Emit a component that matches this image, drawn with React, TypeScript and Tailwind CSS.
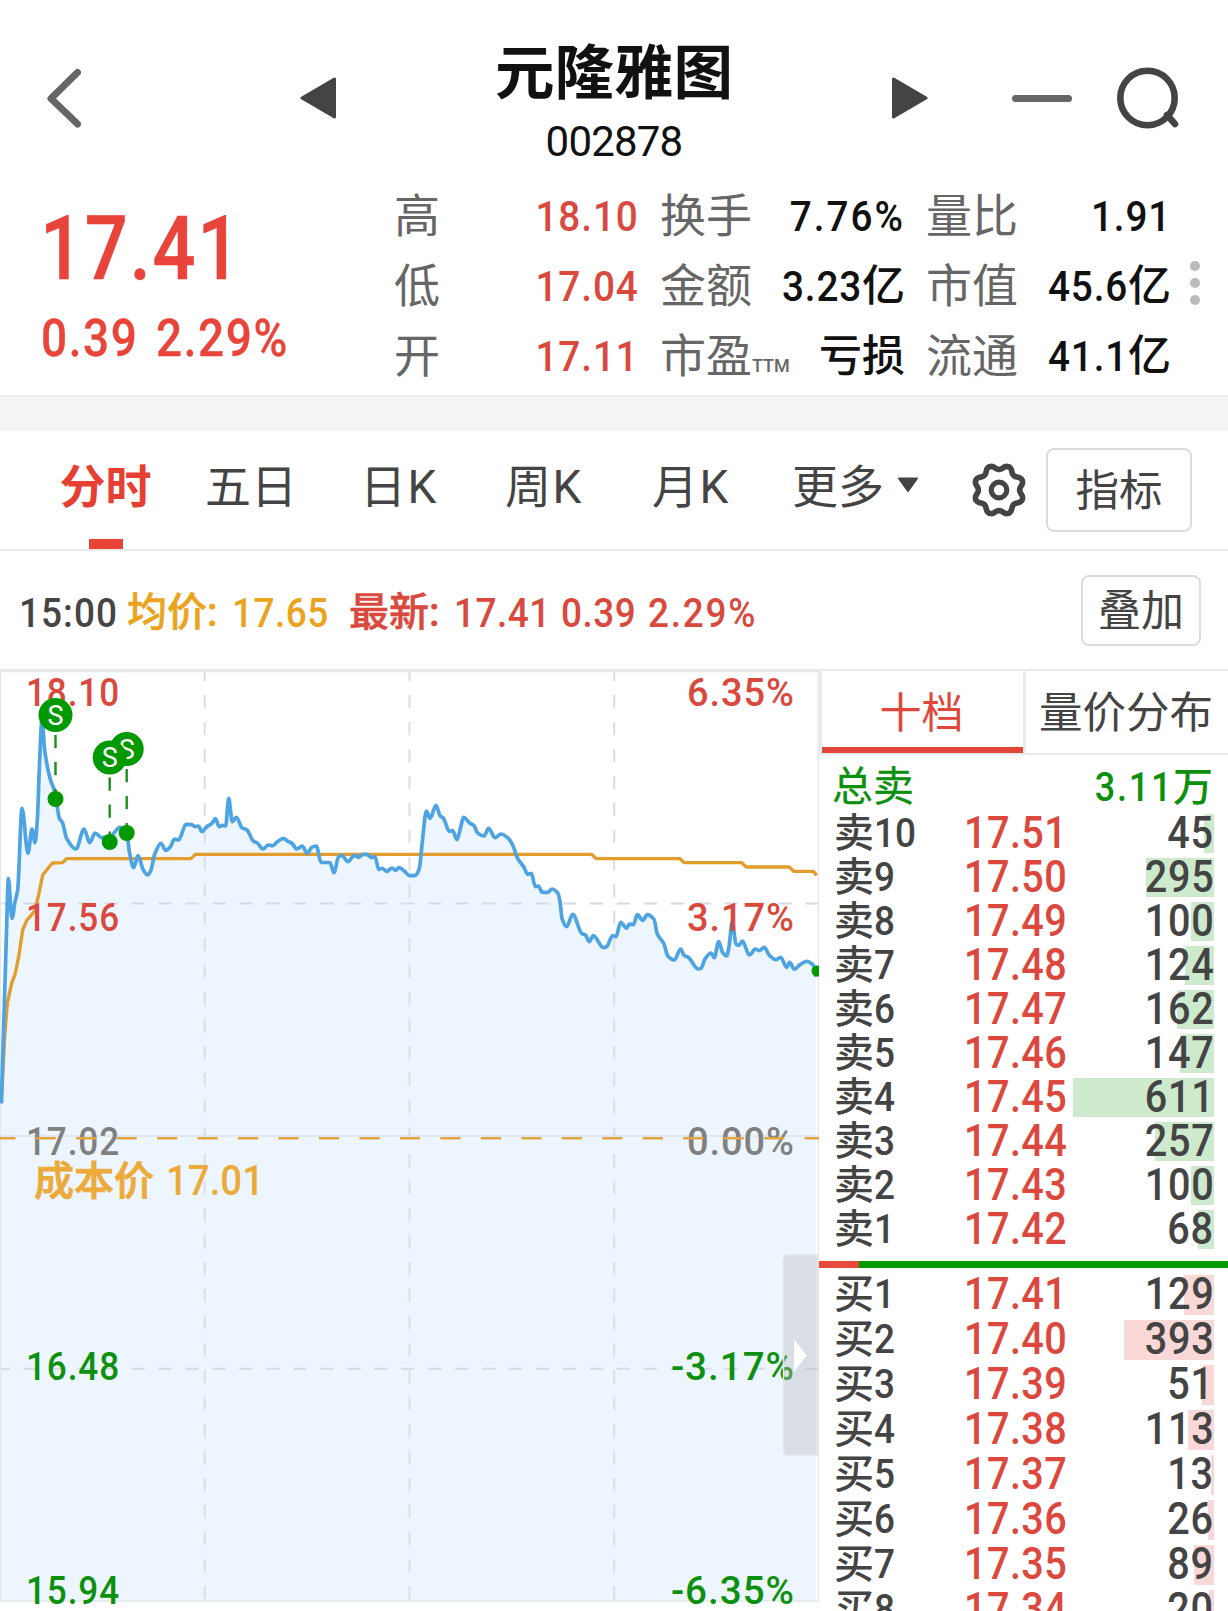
import type { ReactNode } from 'react';
import { clsx } from 'clsx';

type Point = [number, number];

const stats = [
  [
    { label: '高', value: '18.10', up: true },
    { label: '低', value: '17.04', up: true },
    { label: '开', value: '17.11', up: true },
  ],
  [
    { label: '换手', value: '7.76%' },
    { label: '金额', value: '3.23', unit: '亿' },
    { label: '市盈', suffix: 'TTM', unit: '亏损' },
  ],
  [
    { label: '量比', value: '1.91' },
    { label: '市值', value: '45.6', unit: '亿' },
    { label: '流通', value: '41.1', unit: '亿' },
  ],
];

const asks = [
  { side: '卖', level: 10, price: '17.51', volume: 45 },
  { side: '卖', level: 9, price: '17.50', volume: 295 },
  { side: '卖', level: 8, price: '17.49', volume: 100 },
  { side: '卖', level: 7, price: '17.48', volume: 124 },
  { side: '卖', level: 6, price: '17.47', volume: 162 },
  { side: '卖', level: 5, price: '17.46', volume: 147 },
  { side: '卖', level: 4, price: '17.45', volume: 611 },
  { side: '卖', level: 3, price: '17.44', volume: 257 },
  { side: '卖', level: 2, price: '17.43', volume: 100 },
  { side: '卖', level: 1, price: '17.42', volume: 68 },
];

const bids = [
  { side: '买', level: 1, price: '17.41', volume: 129 },
  { side: '买', level: 2, price: '17.40', volume: 393 },
  { side: '买', level: 3, price: '17.39', volume: 51 },
  { side: '买', level: 4, price: '17.38', volume: 113 },
  { side: '买', level: 5, price: '17.37', volume: 13 },
  { side: '买', level: 6, price: '17.36', volume: 26 },
  { side: '买', level: 7, price: '17.35', volume: 89 },
  { side: '买', level: 8, price: '17.34', volume: 20 },
];

// Points are stored in thirds of a pixel, relative to the origin of each session segment
const shift = (ox: number, oy: number, pts: Point[]): Point[] => pts.map(([x, y]) => [ox + x / 3, oy + y / 3]);

const pricePoints: Point[] = [
  ...shift(0, 660, [
    [4, 1330], [14, 1000], [20, 800], [25, 655], [36, 775], [45, 725], [53, 690], [66, 445], [84, 580], [96, 507],
    [105, 548], [112, 480], [119, 300], [126, 180], [134, 270], [150, 355], [166, 400], [178, 475], [187, 487],
    [200, 535], [228, 567], [252, 507], [269, 548], [285, 519], [305, 533], [330, 530], [360, 502], [381, 520],
    [388, 575], [401, 623], [414, 587], [430, 630], [443, 645], [452, 632], [465, 580], [483, 550], [497, 571],
    [510, 562], [524, 537], [536, 540], [558, 493], [575, 494], [585, 500], [595, 498], [606, 515], [620, 500],
    [635, 491], [646, 476], [658, 500], [668, 496], [677, 498], [686, 415], [697, 485], [709, 472], [726, 503],
    [741, 510], [760, 543], [772, 549], [789, 567], [805, 555],
  ]),
  ...shift(270, 760, [
    [8, 257], [22, 245], [40, 235], [55, 245], [66, 250], [80, 267], [97, 258], [112, 280], [125, 262], [139, 258],
    [153, 307], [180, 308], [192, 338], [205, 292], [215, 286], [234, 305], [253, 286], [265, 292], [280, 283],
    [292, 284], [305, 293], [315, 290], [326, 328], [336, 325], [351, 334], [366, 324], [377, 331], [387, 323],
    [405, 335], [420, 347], [436, 346], [448, 325], [457, 245], [469, 153], [480, 175], [498, 136], [510, 167],
    [520, 174], [538, 214], [548, 212], [561, 239], [570, 210], [581, 172], [600, 190], [612, 197], [622, 218],
    [642, 228], [656, 205], [675, 233], [693, 222], [715, 235], [728, 255], [743, 295], [762, 322], [773, 343],
    [784, 340], [796, 380], [805, 378], [817, 397], [833, 397], [846, 387],
  ]),
  ...shift(540, 780, [
    [54, 340], [60, 365], [66, 415], [80, 440], [98, 403], [125, 460], [137, 466], [148, 485], [160, 467],
    [190, 503], [200, 500], [218, 467], [228, 470], [242, 427], [260, 445], [268, 432], [280, 434], [292, 404],
    [308, 421], [322, 404], [342, 418], [352, 462], [372, 492], [383, 527], [403, 540], [422, 507], [432, 526],
    [445, 532], [475, 567], [483, 565], [495, 537], [513, 519], [523, 533], [536, 485], [548, 518], [560, 528],
    [567, 500], [577, 425], [588, 492], [597, 496], [607, 483], [628, 525], [646, 507], [657, 512], [673, 502],
    [688, 526], [708, 539], [722, 532], [740, 562], [749, 547], [763, 568], [780, 554], [800, 544], [820, 556],
    [828, 590],
  ]),
];

const averagePoints: Point[] = [
  ...shift(0, 660, [
    [4, 1330], [14, 1130], [22, 1030], [35, 970], [46, 940], [56, 890], [68, 810], [80, 782], [105, 752],
    [118, 695], [128, 645], [157, 609], [187, 608], [200, 596], [572, 596], [587, 583],
  ]),
  ...shift(540, 780, [
    [155, 223], [169, 236], [420, 236], [433, 248], [605, 248], [619, 261], [748, 261], [761, 274], [820, 274],
    [830, 286],
  ]),
];

// Monotone cubic interpolation, flat at local highs and lows
function smoothPath(pts: Point[]) {
  const slope = (i: number) => (pts[i + 1][1] - pts[i][1]) / (pts[i + 1][0] - pts[i][0]);
  const tangent = (i: number) => {
    if (i === 0) return slope(0);
    if (i === pts.length - 1) return slope(i - 1);
    const a = slope(i - 1);
    const b = slope(i);
    return a * b <= 0 ? 0 : (2 * a * b) / (a + b);
  };
  let d = `M${pts[0][0]} ${pts[0][1]}`;
  for (let i = 1; i < pts.length; i++) {
    const [x0, y0] = pts[i - 1];
    const [x1, y1] = pts[i];
    const h = (x1 - x0) / 3;
    d += `C${x0 + h} ${y0 + h * tangent(i - 1)} ${x1 - h} ${y1 - h * tangent(i)} ${x1} ${y1}`;
  }
  return d;
}

const priceLine = smoothPath(pricePoints);
const averageLine = 'M' + averagePoints.map((p) => p.join(' ')).join('L');

const gear = Array.from({ length: 97 }, (_, i) => {
  const a = (i / 96) * Math.PI * 2;
  const c = Math.cos(8 * a - Math.PI);
  const r = 22.9 + 2.3 * Math.sign(c) * Math.pow(Math.abs(c), 0.8);
  return `${(28 + r * Math.sin(a)).toFixed(2)},${(28 - r * Math.cos(a)).toFixed(2)}`;
}).join(' ');

const axis = [
  { y: 706, price: '18.10', pct: '6.35%', pctWidth: 108, cls: 'fill-[#d9493e]' },
  { y: 931, price: '17.56', pct: '3.17%', pctWidth: 108, cls: 'fill-[#d9493e]' },
  { y: 1155, price: '17.02', pct: '0.00%', pctWidth: 108, cls: 'fill-[#808080]' },
  { y: 1380, price: '16.48', pct: '-3.17%', pctWidth: 124, cls: 'fill-[#0d900d]' },
  { y: 1604, price: '15.94', pct: '-6.35%', pctWidth: 124, cls: 'fill-[#0d900d]' },
];

const trades = [
  { x: 126.7, badge: 749, dot: 833 },
  { x: 109.7, badge: 757.5, dot: 842 },
  { x: 55.5, badge: 715, dot: 799 },
];

// Narrowed figures, close to the DIN numerals used for quotes
function Num({ children, right, className }: { children: ReactNode; right?: boolean; className?: string }) {
  return (
    <span
      className={clsx(
        'inline-block scale-x-90 font-medium whitespace-nowrap',
        right ? 'origin-right' : 'origin-left',
        className,
      )}
    >
      {children}
    </span>
  );
}

function Header() {
  return (
    <header className="flex h-[184px] items-start justify-between pt-[30px]">
      <div className="flex h-[136px] w-[336px] items-center justify-between pl-[46px]">
        <svg viewBox="0 0 36 60" className="h-[60px] w-[36px]">
          <path d="M31.5 4.5L5 30.5L31.5 56" fill="none" stroke="#666" strokeWidth="7" strokeLinecap="round" strokeLinejoin="round" />
        </svg>
        <svg viewBox="0 0 36 42" className="h-[42px] w-[36px]">
          <path d="M2 21L34.5 2V40Z" fill="#444" stroke="#444" strokeWidth="3" strokeLinejoin="round" />
        </svg>
      </div>
      <div className="flex flex-col items-center pt-[2px] text-[#111]">
        <h1 className="text-[59.5px] leading-[84px] font-bold">元隆雅图</h1>
        <p className="text-[42px] leading-[51px] tracking-[-0.8px]">002878</p>
      </div>
      <div className="flex h-[136px] w-[336px] items-center pr-[46px]">
        <svg viewBox="0 0 36 42" className="h-[42px] w-[36px]">
          <path d="M34 21L1.5 2V40Z" fill="#444" stroke="#444" strokeWidth="3" strokeLinejoin="round" />
        </svg>
        <div className="ml-[84px] h-[7px] w-[60px] rounded-full bg-[#666]" />
        <svg viewBox="0 0 64 64" className="ml-[44px] h-[64px] w-[64px]">
          <circle cx="31.5" cy="32" r="27.2" fill="none" stroke="#444" strokeWidth="6.6" />
          <path d="M51 49L59 58" stroke="#444" strokeWidth="6.6" strokeLinecap="round" />
        </svg>
      </div>
    </header>
  );
}

function Quote() {
  return (
    <section className="flex h-[213px] border-b-2 border-[#ebebeb]">
      <div className="w-[394px] pl-[40px] text-[#e8443a]">
        <p className="mt-[14px] text-[89px] leading-[102px]">
          <Num className="scale-x-[0.85] tracking-[2.2px] [-webkit-text-stroke:0.6px]">17.41</Num>
        </p>
        <p className="mt-[9px] ml-[1px] text-[51px] leading-[60px]">
          <Num className="tracking-[1.8px] [-webkit-text-stroke:0.3px] [word-spacing:5px]">0.39 2.29%</Num>
        </p>
      </div>
      <div className="flex w-[777px] justify-between">
        {stats.map((column, i) => (
          <div key={i} className="w-[245px]">
            {column.map((item) => (
              <div key={item.label} className="flex h-[70px] items-baseline justify-between">
                <span className="text-[46px] leading-[64px] whitespace-nowrap text-[#666]">
                  {item.label}
                  {item.suffix && <span className="text-[18px] font-medium">{item.suffix}</span>}
                </span>
                <span
                  className={clsx(
                    'relative -top-px text-[43px] leading-[64px] font-medium whitespace-nowrap',
                    item.up ? 'text-[#d9493e]' : 'text-[#111]',
                  )}
                >
                  {item.value && (
                    <Num right className={item.value.endsWith('%') ? 'tracking-[2.2px]' : 'tracking-[1px]'}>
                      {item.value}
                    </Num>
                  )}
                  {item.unit}
                </span>
              </div>
            ))}
          </div>
        ))}
      </div>
      <div className="ml-[19px] flex flex-col gap-[7px] pt-[77px]">
        <i className="size-[10px] rounded-full bg-[#bbb]" />
        <i className="size-[10px] rounded-full bg-[#bbb]" />
        <i className="size-[10px] rounded-full bg-[#bbb]" />
      </div>
    </section>
  );
}

function Tabs() {
  return (
    <nav className="flex h-[120px] border-b-2 border-[#ebebeb] text-[46px] leading-[112px] text-[#444]">
      <div className="ml-[59px] flex w-[93px] flex-col items-center font-bold text-[#e63f34]">
        <span className="h-[108px]">分时</span>
        <span className="h-[10px] w-[34px] bg-[#e84335]" />
      </div>
      <span className="ml-[53px] w-[92px]">五日</span>
      <span className="ml-[63px] w-[78px] tracking-[1.5px]">日K</span>
      <span className="ml-[67px] w-[78px] tracking-[1.5px]">周K</span>
      <span className="ml-[69px] w-[78px] tracking-[1.5px]">月K</span>
      <span className="ml-[62px] w-[93px]">更多</span>
      <svg viewBox="0 0 22 16" className="mt-[46px] ml-[12px] h-[16px] w-[22px]">
        <path d="M2 1.5H20L11 14Z" fill="#444" stroke="#444" strokeWidth="2" strokeLinejoin="round" />
      </svg>
      <svg viewBox="0 0 56 56" className="mt-[31px] ml-[52px] h-[56px] w-[56px]">
        <polygon points={gear} fill="none" stroke="#444" strokeWidth="5.6" strokeLinejoin="round" />
        <circle cx="28" cy="28" r="7.8" fill="none" stroke="#444" strokeWidth="5.2" />
      </svg>
      <button className="mt-[17px] ml-[19px] h-[84px] w-[146px] rounded-[8px] border-2 border-[#dcdcdc] text-[43.5px] leading-[84px]">
        指标
      </button>
    </nav>
  );
}

function InfoBar() {
  return (
    <div className="flex h-[120px] items-center border-b-2 border-[#ebebeb] text-[40px] font-medium whitespace-nowrap">
      <div className="flex w-[1081px] pt-[8px] pl-[19px]">
        <Num className="w-[108px] text-[41px] tracking-[1.2px] text-[#444]">15:00</Num>
        <div className="flex w-[222px] text-[#eba31c]">
          <span className="w-[105px] [-webkit-text-stroke:0.5px]">均价:</span>
          <Num className="text-[41px] tracking-[0.6px]">17.65</Num>
        </div>
        <div className="flex text-[#d9493e]">
          <span className="w-[105px] [-webkit-text-stroke:0.5px]">最新:</span>
          <Num className="w-[107px] text-[41px] tracking-[0.6px]">17.41</Num>
          <Num className="w-[87px] text-[41px] tracking-[0.6px]">0.39</Num>
          <Num className="text-[41px] tracking-[2px]">2.29%</Num>
        </div>
      </div>
      <button className="h-[71px] w-[120px] rounded-[8px] border-2 border-[#dcdcdc] pt-[2px] text-[43px] leading-[65px] font-normal text-[#444]">
        叠加
      </button>
    </div>
  );
}

function Chart() {
  return (
    <svg viewBox="0 671 819 940" className="h-[940px] w-[819px] shrink-0">
      <path d={`${priceLine}L816 1601H1Z`} fill="#edf6fe" />
      <g stroke="#dcdde0" strokeWidth="2">
        <path d="M204.7 668V1601M409.5 668V1601M614.2 668V1601" strokeDasharray="13.3 13.7" />
        <path d="M-3.3 903.5H818M-3.3 1368.7H818" stroke="#d6dbe1" strokeDasharray="13.3 13.66" />
      </g>
      <path d="M0.5 671.5H818.5V1601H0.5Z" fill="none" stroke="#e4e8ec" strokeWidth="1.5" />
      <path d="M0 1136H818" stroke="#e1e7ed" strokeWidth="2" />
      <path d={averageLine} fill="none" stroke="#e39d2c" strokeWidth="3.4" strokeLinejoin="round" />
      <path d={priceLine} fill="none" stroke="#4ea3e3" strokeWidth="3.7" strokeLinejoin="round" />
      <circle cx="817" cy="971" r="5.5" fill="#090" />

      <g fontSize="39.5" fontWeight="500" letterSpacing="1">
        {axis.map((row) => (
          <g key={row.price} className={row.cls}>
            <text x="26" y={row.y} textLength="94" lengthAdjust="spacingAndGlyphs">
              {row.price}
            </text>
            <text x={795 - row.pctWidth} y={row.y} textLength={row.pctWidth} lengthAdjust="spacingAndGlyphs">
              {row.pct}
            </text>
          </g>
        ))}
      </g>

      <path d="M-4.8 1138.2H819" stroke="#e2a544" strokeWidth="2.4" strokeDasharray="20.2 20.27" />
      <text
        x="34"
        y="1194.5"
        className="fill-[#ecaa3a] stroke-[#ecaa3a] font-['Noto_Sans_CJK_SC'] text-[40px] font-medium [stroke-width:0.9px]"
      >
        成本价
      </text>
      <text x="166" y="1194.5" fontSize="42" fontWeight="500" textLength="98" lengthAdjust="spacingAndGlyphs" className="fill-[#ecaa3a]">
        17.01
      </text>

      {trades.map((t) => (
        <g key={t.x} fill="#090">
          <path d={`M${t.x} ${t.badge + 20}V${t.dot}`} stroke="#1c8f1c" strokeWidth="2.4" strokeDasharray="13.3 13.7" />
          <circle cx={t.x} cy={t.dot} r="8" />
          <circle cx={t.x} cy={t.badge} r="17" />
          <text x={t.x} y={t.badge + 9.5} textAnchor="middle" fontSize="27" fill="#fff">S</text>
        </g>
      ))}

      <path d="M818 1255H788.5Q783.5 1255 783.5 1260V1450Q783.5 1455 788.5 1455H818Z" fill="#b4b4b4" fillOpacity="0.36" stroke="#e3e6e8" strokeWidth="1.5" />
      <path d="M794 1339L806.5 1355.5L794 1372Z" fill="#fff" />
    </svg>
  );
}

type Level = { side: string; level: number; price: string; volume: number };

function Levels({ rows, buy }: { rows: Level[]; buy?: boolean }) {
  return (
    <div className={clsx('flex flex-col gap-[5px] pr-[14px] pl-[15px]', buy && 'pt-[7px]')}>
      {rows.map((row) => (
        <div
          key={row.level}
          className={clsx('relative flex items-center font-medium text-[#444]', buy ? 'h-[40px] pb-[2px]' : 'h-[39px]')}
        >
          <div
            className={clsx('absolute inset-y-0 right-0', buy ? 'bg-[#fad8d7]' : 'bg-[#cdeacd]')}
            style={{ width: Math.round(row.volume * 0.23) }}
          />
          <span className="relative w-[130px] text-[40px] leading-[39px]">
            {row.side}
            <Num className="text-[41px]">{row.level}</Num>
          </span>
          <Num className="relative text-[44px] leading-[39px] tracking-[0.5px] text-[#dc483d]">{row.price}</Num>
          <Num right className="relative ml-auto text-[44px] leading-[39px] tracking-[0.8px]">{row.volume}</Num>
        </div>
      ))}
    </div>
  );
}

function OrderBook() {
  return (
    <aside className="flex w-[409px] flex-col">
      <div className="flex h-[84px] border-b-2 border-l-[3px] border-[#ebebeb] text-[43.5px] leading-[86px]">
        <div className="h-[82px] w-[201px] border-b-[6px] border-[#e0463a] pr-[2px] text-center text-[42px] text-[#e0463a]">十档</div>
        <div className="w-[205px] border-l-[3px] border-[#ebebeb] pr-[2px] text-center text-[#444]">量价分布</div>
      </div>
      <div className="flex h-[59px] items-center justify-between pt-[6px] pr-[15px] pl-[13px] text-[41px] text-[#0d900d]">
        <span className="[-webkit-text-stroke:0.3px]">总卖</span>
        <span className="text-[40px] font-medium">
          <Num right className="tracking-[2px]">3.11</Num>万
        </span>
      </div>
      <Levels rows={asks} />
      <div className="mt-[12px] flex h-[7px] shrink-0">
        <div className="w-[40px] bg-[#e84a3c]" />
        <div className="flex-1 bg-[#090]" />
      </div>
      <Levels rows={bids} buy />
    </aside>
  );
}

export default function App() {
  return (
    <main className="h-[1611px] w-[1228px] overflow-hidden bg-white font-['Roboto','Noto_Sans_CJK_SC',sans-serif]">
      <Header />
      <Quote />
      <div className="h-[34px] bg-[#f4f4f4]" />
      <Tabs />
      <InfoBar />
      <div className="flex h-[940px] overflow-hidden">
        <Chart />
        <OrderBook />
      </div>
    </main>
  );
}
